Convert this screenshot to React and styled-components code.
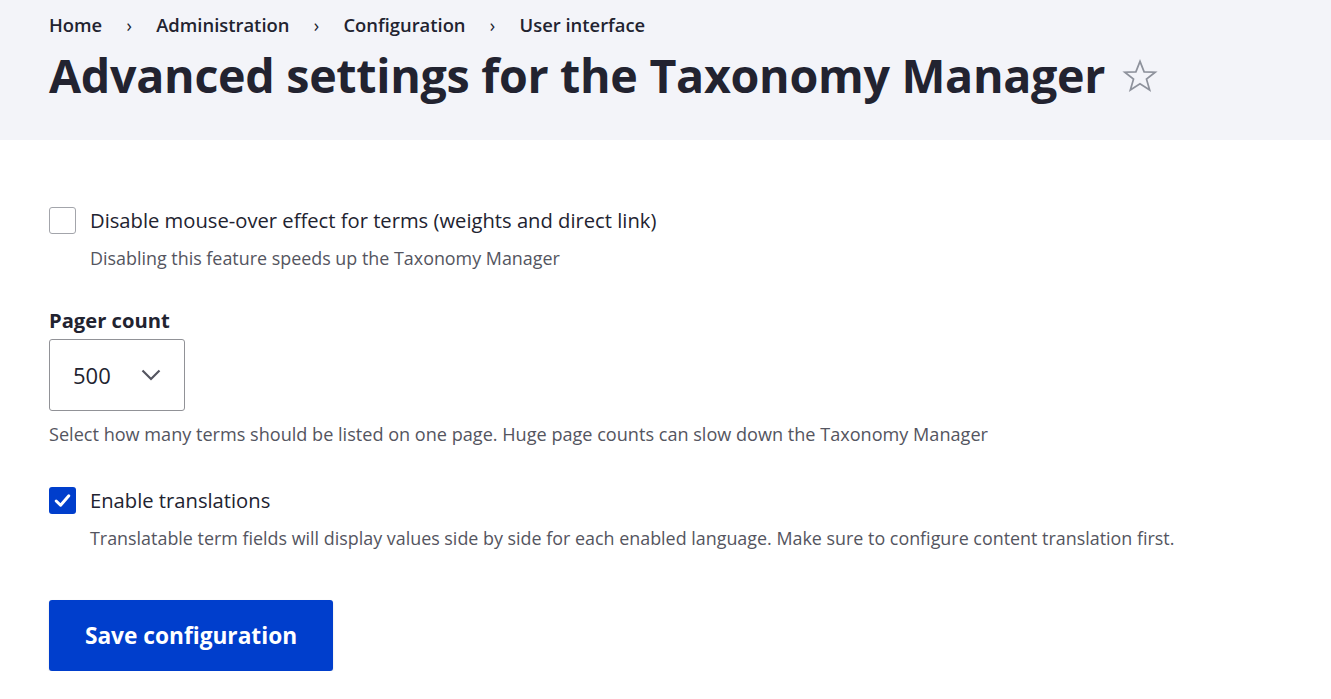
import React from "react";
import styled, { createGlobalStyle } from "styled-components";

const Global = createGlobalStyle`
  html, body { margin: 0; padding: 0; background: #fff; }
  body { font-family: "Open Sans", "Noto Sans", sans-serif; color: #222330; }
  * { box-sizing: border-box; }
`;

const Header = styled.header`
  background: #f3f4f9;
  height: 140px;
  padding: 12px 49px 0;
  display: flex;
  flex-direction: column;
`;

const Crumbs = styled.nav`
  display: flex;
  align-items: center;
  font-size: 18.4px;
  font-weight: 600;
  line-height: 26px;
  color: #222330;
`;

const Sep = styled.span`
  display: inline-block;
  width: 54px;
  text-align: center;
  font-weight: 400;
  font-size: 18px;
`;

const TitleRow = styled.div`
  display: flex;
  align-items: center;
  gap: 16px;
  margin-top: 4px;
`;

const Title = styled.h1`
  margin: 0;
  font-size: 46.6px;
  font-weight: 700;
  line-height: 66px;
  letter-spacing: -0.3px;
  color: #222330;
`;

const Star = styled.svg`
  width: 38px;
  height: 38px;
  margin-top: 2px;
`;

const Main = styled.main`
  padding: 64px 49px 0;
  display: flex;
  flex-direction: column;
`;

const CheckItem = styled.div`
  display: grid;
  grid-template-columns: 27px 1fr;
  column-gap: 14px;
  align-items: center;
  margin-bottom: ${(p) => p.$mb}px;
`;

const Box = styled.span`
  width: 27px;
  height: 27px;
  border-radius: 3px;
  border: ${(p) => (p.$checked ? "none" : "1.5px solid #a3a5ab")};
  background: ${(p) => (p.$checked ? "#003ecc" : "#fff")};
  display: flex;
  align-items: center;
  justify-content: center;
`;

const CheckLabel = styled.label`
  font-size: 20.2px;
  line-height: 32px;
  color: #222330;
`;

const Desc = styled.div`
  grid-column: 2;
  font-size: 17.9px;
  line-height: 28px;
  color: #545560;
  margin-top: 8px;
`;

const FieldLabel = styled.div`
  font-size: 20.2px;
  font-weight: 700;
  line-height: 28px;
  color: #222330;
  margin-bottom: 5px;
`;

const Select = styled.div`
  width: 136px;
  height: 72px;
  border: 1px solid #919297;
  border-radius: 3px;
  display: flex;
  align-items: center;
  justify-content: space-between;
  padding: 0 23px 0 23px;
  font-size: 22px;
  color: #222330;
`;

const FieldDesc = styled.div`
  font-size: 18.1px;
  line-height: 28px;
  color: #545560;
  margin-top: 9px;
  margin-bottom: 36px;
`;

const Button = styled.button`
  align-self: flex-start;
  width: 284px;
  height: 71px;
  background: #003ecc;
  color: #fff;
  border: none;
  border-radius: 3px;
  font-family: "Open Sans", "Noto Sans", sans-serif;
  font-weight: 700;
  font-size: 22.7px;
  margin-top: 48px;
  box-shadow: 0 1px 2px rgba(0,0,0,0.15);
`;

function Check({ checked }) {
  return (
    <Box $checked={checked}>
      {checked && (
        <svg width="19" height="19" viewBox="0 0 18 18">
          <path d="M3 9.5 L7.2 13.5 L15 4.5" fill="none" stroke="#fff" strokeWidth="2.8" strokeLinecap="round" strokeLinejoin="round" />
        </svg>
      )}
    </Box>
  );
}

export default function App() {
  return (
    <>
      <Global />
      <Header>
        <Crumbs>
          <span>Home</span>
          <Sep>›</Sep>
          <span>Administration</span>
          <Sep>›</Sep>
          <span>Configuration</span>
          <Sep>›</Sep>
          <span>User interface</span>
        </Crumbs>
        <TitleRow>
          <Title>Advanced settings for the Taxonomy Manager</Title>
          <Star viewBox="0 0 24 24">
            <path
              d="M12 2.8 L14.6 9.4 L21.6 9.6 L16.1 14 L18.1 20.8 L12 16.9 L5.9 20.8 L7.9 14 L2.4 9.6 L9.4 9.4 Z"
              fill="none"
              stroke="#8e929c"
              strokeWidth="1.1"
              strokeLinejoin="miter"
            />
          </Star>
        </TitleRow>
      </Header>
      <Main>
        <CheckItem $mb={34}>
          <Check checked={false} />
          <CheckLabel>Disable mouse-over effect for terms (weights and direct link)</CheckLabel>
          <Desc>Disabling this feature speeds up the Taxonomy Manager</Desc>
        </CheckItem>
        <FieldLabel>Pager count</FieldLabel>
        <Select>
          <span>500</span>
          <svg width="20" height="12" viewBox="0 0 20 12">
            <path d="M1.5 1.5 L10 10 L18.5 1.5" fill="none" stroke="#545560" strokeWidth="2.2" />
          </svg>
        </Select>
        <FieldDesc>Select how many terms should be listed on one page. Huge page counts can slow down the Taxonomy Manager</FieldDesc>
        <CheckItem $mb={0}>
          <Check checked />
          <CheckLabel>Enable translations</CheckLabel>
          <Desc>Translatable term fields will display values side by side for each enabled language. Make sure to configure content translation first.</Desc>
        </CheckItem>
        <Button>Save configuration</Button>
      </Main>
    </>
  );
}
